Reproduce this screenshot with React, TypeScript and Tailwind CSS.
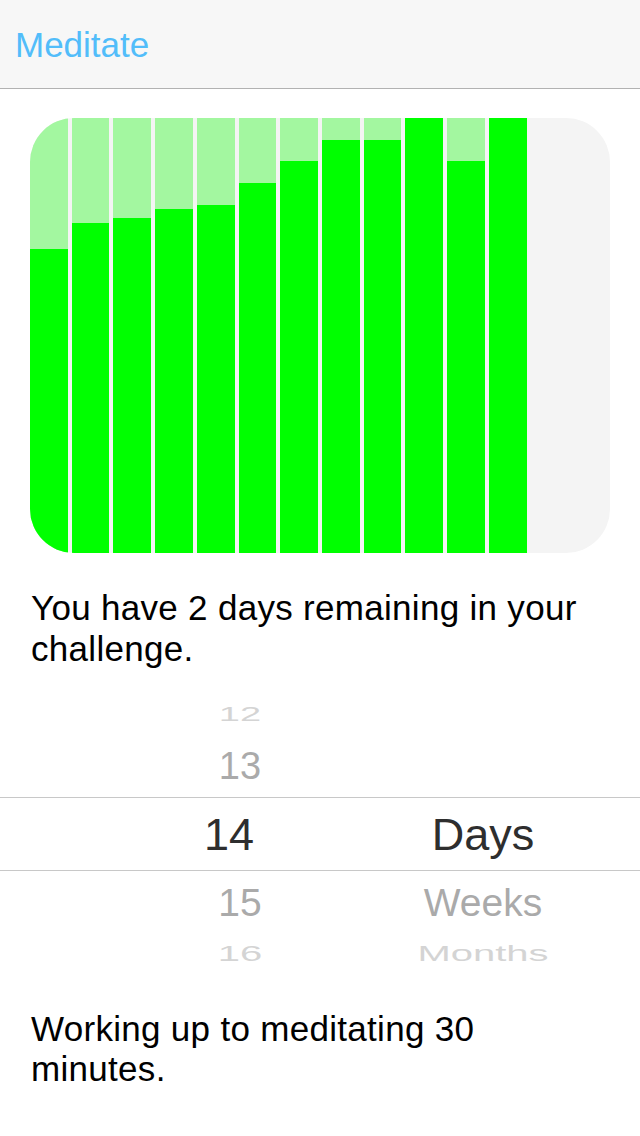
const sessions = [304, 330, 335, 344, 348, 370, 392, 413, 413, 435, 392, 435];
const CHART_H = 435;
const TOTAL_SLOTS = 14;

function ProgressChart() {
  const slots = Array.from({ length: TOTAL_SLOTS }, (_, i) => sessions[i]);

  return (
    <div className="mx-[30px] mt-[29px] flex h-[435px] gap-[4px] overflow-hidden rounded-[44px] bg-[#f4f4f4]">
      {slots.map((value, i) =>
        value === undefined ? (
          <div key={i} className="flex-1" />
        ) : (
          <div key={i} className="flex flex-1 flex-col justify-end bg-[#a3f7a0]">
            <div
              className="w-full bg-[#00ff00]"
              style={{ height: `${(value / CHART_H) * 100}%` }}
            />
          </div>
        )
      )}
    </div>
  );
}

function PickerRow({
  num,
  unit,
  className,
  textClass,
}: {
  num: string;
  unit?: string;
  className: string;
  textClass: string;
}) {
  return (
    <div className={`flex items-center ${className}`}>
      <span className={`ml-[160px] w-[160px] text-center leading-none ${textClass}`}>{num}</span>
      <span className={`ml-[63px] w-[200px] text-center leading-none ${textClass}`}>{unit}</span>
    </div>
  );
}

export default function App() {
  return (
    <div className="min-h-[1136px] w-[640px] bg-white font-['Liberation_Sans',Arial,sans-serif] text-black">
      {/* Nav bar */}
      <div className="flex h-[89px] items-center border-b border-[#b2b2b2] bg-[#f7f7f7] pl-[15px]">
        <span className="text-[35px] leading-none text-[#52bdfa]">Meditate</span>
      </div>

      <ProgressChart />

      <p className="mt-[34px] px-[31px] text-[35px] leading-[41px] tracking-[0.3px]">
        You have 2 days remaining in your challenge.
      </p>

      {/* Duration picker */}
      <div className="mt-[19px]">
        <PickerRow
          num="12"
          className="h-[52px]"
          textClass="text-[38px] text-[#d4d4d4] scale-y-[0.55]"
        />
        <PickerRow
          num="13"
          className="h-[57px] pb-[6px]"
          textClass="text-[38px] text-[#aaaaaa]"
        />
        <div className="flex h-[74px] items-center border-y border-[#c8c8c8]">
          <span className="ml-[160px] w-[160px] pr-[22px] text-center text-[45px] leading-none text-[#2e2e2e]">
            14
          </span>
          <span className="ml-[63px] w-[200px] text-center text-[45px] leading-none text-[#2e2e2e]">
            Days
          </span>
        </div>
        <PickerRow
          num="15"
          unit="Weeks"
          className="h-[62px]"
          textClass="text-[39px] text-[#aaaaaa]"
        />
        <PickerRow
          num="16"
          unit="Months"
          className="h-[40px]"
          textClass="text-[40px] text-[#d4d4d4] scale-y-[0.55]"
        />
      </div>

      <p className="mt-[36px] px-[31px] text-[35px] leading-[40px] tracking-[0.3px]">
        Working up to meditating 30 minutes.
      </p>
    </div>
  );
}
